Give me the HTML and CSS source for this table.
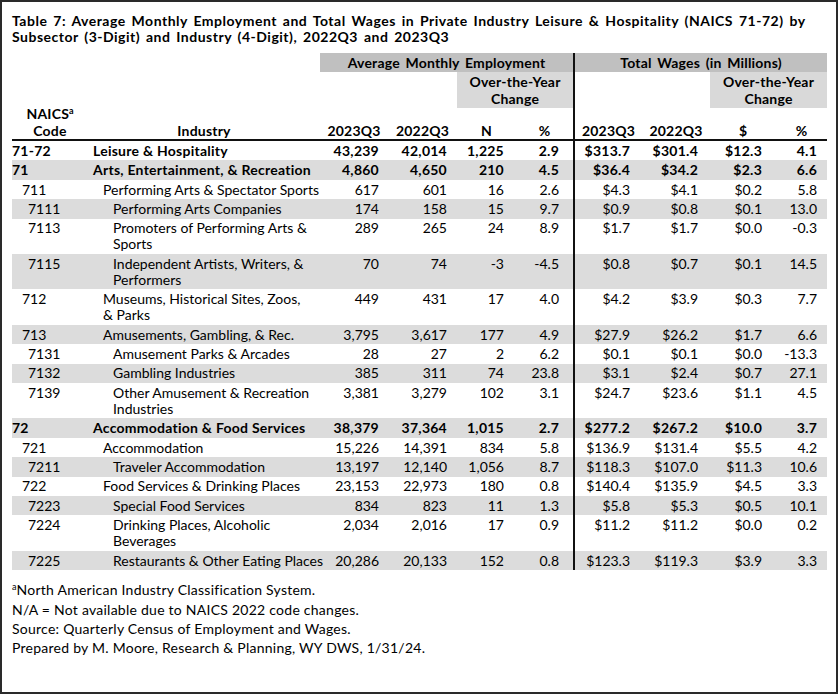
FILE: index.html
```html
<!DOCTYPE html>
<html lang="en">
<head>
<meta charset="utf-8">
<title>Table 7</title>
<link rel="stylesheet" href="styles.css">
</head>
<body>
<div class="frame">
  <h1 class="title">Table 7: Average Monthly Employment and Total Wages in Private Industry Leisure &amp; Hospitality (NAICS 71-72) by<br>Subsector (3-Digit) and Industry (4-Digit), 2022Q3 and 2023Q3</h1>
  <table class="tbl">
    <colgroup>
      <col class="c-code"><col class="c-ind"><col class="c-e23"><col class="c-e22"><col class="c-en"><col class="c-ep"><col class="c-w23"><col class="c-w22"><col class="c-wd"><col class="c-wp">
    </colgroup>
    <thead>
      <tr class="ha">
        <th></th><th></th>
        <th colspan="4" class="band vl">Average Monthly Employment</th>
        <th colspan="4" class="band">Total Wages (in Millions)</th>
      </tr>
      <tr class="hb">
        <th rowspan="2" class="hcode">NAICS<sup>a</sup><br>Code</th>
        <th rowspan="2" class="hind">Industry</th>
        <th></th><th></th>
        <th colspan="2" class="lband vl">Over-the-Year<br>Change</th>
        <th></th><th></th>
        <th colspan="2" class="lband">Over-the-Year<br>Change</th>
      </tr>
      <tr class="hc">
        <th class="yr">2023Q3</th><th class="yr">2022Q3</th><th>N</th><th class="vl">%</th>
        <th>2023Q3</th><th>2022Q3</th><th>$</th><th>%</th>
      </tr>
    </thead>
    <tbody>
      <tr class="b"><td class="l1">71-72</td><td class="i1">Leisure &amp; Hospitality</td><td>43,239</td><td>42,014</td><td>1,225</td><td class="vl">2.9</td><td>$313.7</td><td>$301.4</td><td>$12.3</td><td>4.1</td></tr>
      <tr class="b g"><td class="l1">71</td><td class="i1">Arts, Entertainment, &amp; Recreation</td><td>4,860</td><td>4,650</td><td>210</td><td class="vl">4.5</td><td>$36.4</td><td>$34.2</td><td>$2.3</td><td>6.6</td></tr>
      <tr><td class="l2">711</td><td class="i2">Performing Arts &amp; Spectator Sports</td><td>617</td><td>601</td><td>16</td><td class="vl">2.6</td><td>$4.3</td><td>$4.1</td><td>$0.2</td><td>5.8</td></tr>
      <tr class="g"><td class="l3">7111</td><td class="i3">Performing Arts Companies</td><td>174</td><td>158</td><td>15</td><td class="vl">9.7</td><td>$0.9</td><td>$0.8</td><td>$0.1</td><td>13.0</td></tr>
      <tr><td class="l3">7113</td><td class="i3">Promoters of Performing Arts &amp;<br>Sports</td><td>289</td><td>265</td><td>24</td><td class="vl">8.9</td><td>$1.7</td><td>$1.7</td><td>$0.0</td><td>-0.3</td></tr>
      <tr class="g"><td class="l3">7115</td><td class="i3">Independent Artists, Writers, &amp;<br>Performers</td><td>70</td><td>74</td><td>-3</td><td class="vl">-4.5</td><td>$0.8</td><td>$0.7</td><td>$0.1</td><td>14.5</td></tr>
      <tr><td class="l2">712</td><td class="i2">Museums, Historical Sites, Zoos,<br>&amp; Parks</td><td>449</td><td>431</td><td>17</td><td class="vl">4.0</td><td>$4.2</td><td>$3.9</td><td>$0.3</td><td>7.7</td></tr>
      <tr class="g"><td class="l2">713</td><td class="i2">Amusements, Gambling, &amp; Rec.</td><td>3,795</td><td>3,617</td><td>177</td><td class="vl">4.9</td><td>$27.9</td><td>$26.2</td><td>$1.7</td><td>6.6</td></tr>
      <tr><td class="l3">7131</td><td class="i3">Amusement Parks &amp; Arcades</td><td>28</td><td>27</td><td>2</td><td class="vl">6.2</td><td>$0.1</td><td>$0.1</td><td>$0.0</td><td>-13.3</td></tr>
      <tr class="g"><td class="l3">7132</td><td class="i3">Gambling Industries</td><td>385</td><td>311</td><td>74</td><td class="vl">23.8</td><td>$3.1</td><td>$2.4</td><td>$0.7</td><td>27.1</td></tr>
      <tr><td class="l3">7139</td><td class="i3">Other Amusement &amp; Recreation<br>Industries</td><td>3,381</td><td>3,279</td><td>102</td><td class="vl">3.1</td><td>$24.7</td><td>$23.6</td><td>$1.1</td><td>4.5</td></tr>
      <tr class="b g"><td class="l1">72</td><td class="i1">Accommodation &amp; Food Services</td><td>38,379</td><td>37,364</td><td>1,015</td><td class="vl">2.7</td><td>$277.2</td><td>$267.2</td><td>$10.0</td><td>3.7</td></tr>
      <tr><td class="l2">721</td><td class="i2">Accommodation</td><td>15,226</td><td>14,391</td><td>834</td><td class="vl">5.8</td><td>$136.9</td><td>$131.4</td><td>$5.5</td><td>4.2</td></tr>
      <tr class="g"><td class="l3">7211</td><td class="i3">Traveler Accommodation</td><td>13,197</td><td>12,140</td><td>1,056</td><td class="vl">8.7</td><td>$118.3</td><td>$107.0</td><td>$11.3</td><td>10.6</td></tr>
      <tr><td class="l2">722</td><td class="i2">Food Services &amp; Drinking Places</td><td>23,153</td><td>22,973</td><td>180</td><td class="vl">0.8</td><td>$140.4</td><td>$135.9</td><td>$4.5</td><td>3.3</td></tr>
      <tr class="g"><td class="l3">7223</td><td class="i3">Special Food Services</td><td>834</td><td>823</td><td>11</td><td class="vl">1.3</td><td>$5.8</td><td>$5.3</td><td>$0.5</td><td>10.1</td></tr>
      <tr><td class="l3">7224</td><td class="i3">Drinking Places, Alcoholic<br>Beverages</td><td>2,034</td><td>2,016</td><td>17</td><td class="vl">0.9</td><td>$11.2</td><td>$11.2</td><td>$0.0</td><td>0.2</td></tr>
      <tr class="g"><td class="l3">7225</td><td class="i3">Restaurants &amp; Other Eating Places</td><td>20,286</td><td>20,133</td><td>152</td><td class="vl">0.8</td><td>$123.3</td><td>$119.3</td><td>$3.9</td><td>3.3</td></tr>
    </tbody>
  </table>
  <div class="notes">
    <p><sup>a</sup>North American Industry Classification System.</p>
    <p>N/A = Not available due to NAICS 2022 code changes.</p>
    <p>Source: Quarterly Census of Employment and Wages.</p>
    <p>Prepared by M. Moore, Research &amp; Planning, WY DWS, 1/31/24.</p>
  </div>
</div>
</body>
</html>
```
FILE: styles.css
```css
html, body {
  margin: 0;
  padding: 0;
  background: #fff;
}
body {
  font-family: Lato, "Open Sans", "Liberation Sans", sans-serif;
  color: #000;
  font-size: 14px;
}
.frame {
  box-sizing: border-box;
  width: 838px;
  height: 694px;
  border: 2px solid #2a2a2a;
  padding: 10.5px 10px 0 10px;
}
.title {
  margin: 0 0 7px 0;
  font-size: 14px;
  font-weight: 700;
  line-height: 16.8px;
  letter-spacing: 0.5px;
  word-spacing: 2px;
  white-space: nowrap;
}
.tbl {
  width: 815px;
  table-layout: fixed;
  border-collapse: separate;
  border-spacing: 0;
}
.c-code { width: 76px; }
.c-ind { width: 232px; }
.c-e23 { width: 68px; }
.c-e22 { width: 69px; }
.c-en { width: 59px; }
.c-ep { width: 59px; }
.c-w23 { width: 67px; }
.c-w22 { width: 68px; }
.c-wd { width: 66px; }
.c-wp { width: 51px; }

.tbl th {
  font-weight: 700;
  padding: 0;
  line-height: 17px;
  text-align: center;
  white-space: nowrap;
  letter-spacing: 0.2px;
  word-spacing: 2px;
}
.ha th {
  padding: 1px 0;
}
.band {
  background: #c0c0c0;
}
.hb th {
  padding: 1px 0;
  vertical-align: top;
}
.lband {
  background: #d9d9d9;
}
.hb .hcode, .hb .hind {
  vertical-align: bottom;
  padding: 0;
  border-bottom: 2px solid #111;
}
.hc th {
  height: 31px;
  vertical-align: bottom;
  border-bottom: 2px solid #111;
}
.tbl sup, .notes sup {
  font-size: 9px;
  line-height: 0;
  vertical-align: 5px;
  font-weight: 400;
  letter-spacing: 0;
}
.hcode sup { font-weight: 700; }

.tbl .vl {
  border-right: 2px solid #111;
}

.tbl td {
  padding: 1.8px 0 1.6px 0;
  line-height: 16px;
  vertical-align: top;
  text-align: right;
  white-space: nowrap;
}
.tbl td:nth-child(1), .tbl td:nth-child(2) {
  text-align: left;
}
.tbl td:nth-child(3) { padding-right: 9px; }
.tbl td:nth-child(4) { padding-right: 10px; }
.tbl td:nth-child(5) { padding-right: 12px; }
.tbl td:nth-child(6) { padding-right: 14px; }
.tbl td:nth-child(7) { padding-right: 12px; }
.tbl td:nth-child(8) { padding-right: 12px; }
.tbl td:nth-child(9) { padding-right: 14px; }
.tbl td:nth-child(10) { padding-right: 10px; }

.tbl td.l1 { padding-left: 0; }
.tbl td.l2 { padding-left: 10px; }
.tbl td.l3 { padding-left: 16px; }
.tbl td.i1 { padding-left: 5px; }
.tbl td.i2 { padding-left: 15px; }
.tbl td.i3 { padding-left: 25px; }

.tbl tr.g td {
  background: #dcdcdc;
}
.tbl tr.b td {
  font-weight: 700;
  letter-spacing: 0.25px;
}

.notes {
  margin-top: 10px;
}
.notes p {
  margin: 0;
  line-height: 19.4px;
  letter-spacing: 0.25px;
}
```
